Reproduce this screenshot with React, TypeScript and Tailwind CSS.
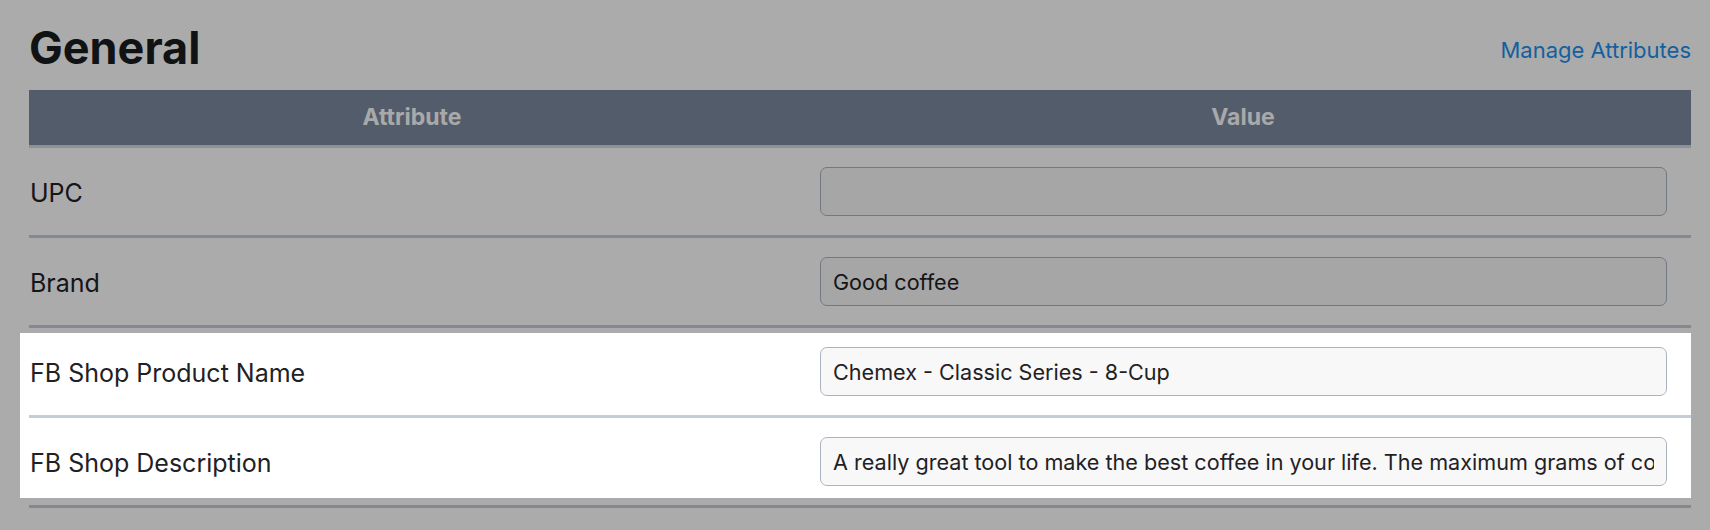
const rows = [
  { label: 'UPC', value: '' },
  { label: 'Brand', value: 'Good coffee' },
];

const highlighted = [
  { label: 'FB Shop Product Name', value: 'Chemex - Classic Series - 8-Cup' },
  {
    label: 'FB Shop Description',
    value:
      'A really great tool to make the best coffee in your life. The maximum grams of coffee you can brew is 50g.',
  },
];

function AttributeRow({ label, value }: { label: string; value: string }) {
  return (
    <div className="grid grid-cols-[766px_1fr] h-[90px] border-b-[3px] border-[#c5cdd6]">
      <div className="flex items-center pl-px pt-[4px] text-[25px] text-[#1f2124]">{label}</div>
      <div className="flex items-center pl-[25px] pr-[24px]">
        <input
          readOnly
          value={value}
          className="w-full h-[49px] rounded-[7px] border-[1.5px] border-[#aab4c1] bg-[#f8f8f8] px-[12px] text-[21.6px] text-[#1f2124] outline-none"
        />
      </div>
    </div>
  );
}

export default function App() {
  return (
    <div className="relative h-[530px] w-full overflow-hidden bg-white font-['Inter',sans-serif]">
      <div className="pl-[29px] pr-[19px]">
        {/* title */}
        <div className="flex items-start justify-between pt-[25px] h-[90px]">
          <h1 className="text-[45px] leading-none font-bold text-[#1a1c1f]">General</h1>
          <a href="#" className="mt-[14px] text-[22px] leading-none text-[#1f8fee]">
            Manage Attributes
          </a>
        </div>

        {/* table */}
        <div>
          <div className="grid grid-cols-[766px_1fr] h-[58px] bg-[#7b8a9e] border-b-[3px] border-[#d2d8df] text-[23px] font-bold text-[#fcfcfc]">
            <div className="flex items-center justify-center">Attribute</div>
            <div className="flex items-center justify-center">Value</div>
          </div>

          {rows.map(r => (
            <AttributeRow key={r.label} {...r} />
          ))}

          <div className="relative">
            {highlighted.map(r => (
              <AttributeRow key={r.label} {...r} />
            ))}
            {/* spotlight */}
            <div className="pointer-events-none absolute top-[5px] bottom-[10px] -left-[9px] right-0 z-10 shadow-[0_0_0_3000px_rgba(0,0,0,0.33)]" />
          </div>
        </div>
      </div>
    </div>
  );
}
